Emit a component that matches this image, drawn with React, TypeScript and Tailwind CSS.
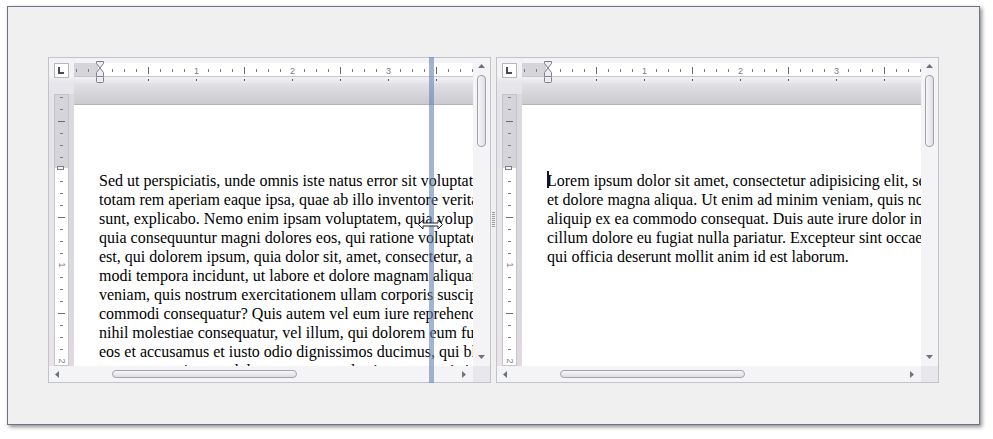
import React from "react";

const LEFT_LINES = [
  "Sed ut perspiciatis, unde omnis iste natus error sit voluptatem accusantium doloremque laudantium,",
  "totam rem aperiam eaque ipsa, quae ab illo inventore veritatis et quasi architecto beatae vitae dicta",
  "sunt, explicabo. Nemo enim ipsam voluptatem, quia voluptas sit, aspernatur aut odit aut fugit, sed",
  "quia consequuntur magni dolores eos, qui ratione voluptatem sequi nesciunt, neque porro quisquam",
  "est, qui dolorem ipsum, quia dolor sit, amet, consectetur, adipisci velit, sed quia non numquam eius",
  "modi tempora incidunt, ut labore et dolore magnam aliquam quaerat voluptatem. Ut enim ad minima",
  "veniam, quis nostrum exercitationem ullam corporis suscipit laboriosam, nisi ut aliquid ex ea",
  "commodi consequatur? Quis autem vel eum iure reprehenderit, qui in ea voluptate velit esse, quam",
  "nihil molestiae consequatur, vel illum, qui dolorem eum fugiat, quo voluptas nulla pariatur? At vero",
  "eos et accusamus et iusto odio dignissimos ducimus, qui blanditiis praesentium voluptatum deleniti",
  "atque corrupti, quos dolores et quas molestias excepturi sint, obcaecati cupiditate non provident,",
];

const RIGHT_LINES = [
  "Lorem ipsum dolor sit amet, consectetur adipisicing elit, sed do eiusmod tempor incididunt ut labore",
  "et dolore magna aliqua. Ut enim ad minim veniam, quis nostrud exercitation ullamco laboris nisi ut",
  "aliquip ex ea commodo consequat. Duis aute irure dolor in reprehenderit in voluptate velit esse",
  "cillum dolore eu fugiat nulla pariatur. Excepteur sint occaecat cupidatat non proident, sunt in culpa",
  "qui officia deserunt mollit anim id est laborum.",
];

const TICK = "#7c7c86";
const NUM = "#7a7a8a";

function HRuler() {
  const zero = 26;
  const items: React.ReactNode[] = [];
  for (let k = -2; k <= 32; k++) {
    const x = zero + 12 * k;
    if (x < 0 || x > 398 || k === 0) continue;
    if (k % 8 === 0) {
      items.push(
        <text key={k} x={x + 0.5} y={16} fontSize={9} textAnchor="middle" fill={NUM} fontFamily="'Liberation Sans', Arial, sans-serif">
          {k / 8}
        </text>
      );
    } else if (k % 4 === 0) {
      items.push(<rect key={k} x={x} y={9} width={1} height={7} fill="#6a6a74" />);
    } else {
      items.push(<rect key={k} x={x} y={11} width={1} height={3} fill={TICK} />);
    }
    if (k > 0 && k % 4 === 0) {
      items.push(<rect key={"t" + k} x={x} y={21} width={1} height={2} fill="#5a5a64" />);
    }
  }
  return (
    <svg width={399} height={25} shapeRendering="crispEdges" className="block">
      <rect x={0} y={5} width={399} height={14} fill="#ffffff" />
      <rect x={0} y={5} width={24} height={14} fill="#d4d4d9" />
      <rect x={0} y={18} width={399} height={1} fill="#c6c6cd" />
      {items}
      <g shapeRendering="auto" stroke="#7e7e8c" strokeWidth={1} fill="#ececf1">
        <path d="M22.5 3.5 H29.5 V5.5 L26 10 L22.5 5.5 Z" />
        <path d="M26 10 L29.5 14.5 V18.5 H22.5 V14.5 Z" />
        <rect x={22.5} y={18.5} width={7} height={6} rx={1} />
      </g>
    </svg>
  );
}

function VRuler() {
  const zero = 75;
  const items: React.ReactNode[] = [];
  for (let k = -6; k <= 17; k++) {
    const y = zero + 12 * k;
    if (y < 1 || y > 270 || k === 0) continue;
    if (k % 8 === 0) {
      items.push(
        <text
          key={k}
          x={0}
          y={0}
          fontSize={9}
          textAnchor="middle"
          fill={NUM}
          fontFamily="'Liberation Sans', Arial, sans-serif"
          transform={`translate(4.5 ${y}) rotate(90)`}
        >
          {k / 8}
        </text>
      );
    } else if (k % 4 === 0) {
      items.push(<rect key={k} x={4} y={y} width={7} height={1} fill="#6a6a74" />);
    } else {
      items.push(<rect key={k} x={6} y={y} width={3} height={1} fill={TICK} />);
    }
  }
  return (
    <svg width={15} height={272} shapeRendering="crispEdges" className="block">
      <rect x={0} y={0} width={15} height={272} fill="#ffffff" />
      <rect x={0} y={0} width={15} height={74} fill="#d4d4d9" />
      <rect x={0.5} y={0.5} width={14} height={271} fill="none" stroke="#c4c4cc" />
      {items}
      <rect x={3.5} y={72.5} width={6} height={3} fill="#f2f2f4" stroke="#7e7e8c" />
    </svg>
  );
}

function Tri({ dir }: { dir: "up" | "down" | "left" | "right" }) {
  const pts = {
    up: "0,4 7,4 3.5,0",
    down: "0,0 7,0 3.5,4",
    left: "4,0 4,7 0,3.5",
    right: "0,0 0,7 4,3.5",
  }[dir];
  const vertical = dir === "up" || dir === "down";
  return (
    <svg width={vertical ? 7 : 4} height={vertical ? 4 : 7} className="block">
      <polygon points={pts} fill="#72727c" />
    </svg>
  );
}

function Panel({ lines, caret }: { lines: string[]; caret?: boolean }) {
  return (
    <div className="w-[443px] h-[326px] border border-[#bfc3ca] bg-[#f2f2f4] grid grid-cols-[424px_17px] grid-rows-[308px_16px]">
      <div className="flex flex-col min-h-0">
        <div className="h-[25px] flex items-start bg-gradient-to-b from-[#f3f3f5] from-[70%] to-[#e7e7eb]">
          <div className="ml-[5px] mt-[5px] w-[15px] h-[15px] bg-white border border-[#b6b6be] flex items-center justify-center">
            <svg width={7} height={7} className="block" shapeRendering="crispEdges">
              <rect x={0} y={0} width={2} height={7} fill="#4a4a52" />
              <rect x={0} y={5} width={6} height={2} fill="#4a4a52" />
            </svg>
          </div>
          <div className="ml-[5px]">
            <HRuler />
          </div>
        </div>
        <div className="flex-1 flex min-h-0">
          <div className="w-[25px] flex pl-[5px] pt-[11px] bg-gradient-to-b from-[#e6e6ea] from-[78%] to-[#ebe2e8]">
            <VRuler />
            <div className="w-[5px] bg-gradient-to-b from-[#dadade] from-[78%] to-[#e2d8e0]" />
          </div>
          <div className="w-[399px] flex flex-col min-h-0">
            <div className="h-[22px] bg-gradient-to-b from-[#e2e2e6] to-[#cacacf] border-b border-[#b4b4bb]" />
            <div className="flex-1 bg-white overflow-hidden relative pl-[25px] pt-[66px] font-['Liberation_Serif','Times_New_Roman',serif] text-[16px] leading-[19px] text-black whitespace-nowrap">
              {lines.map((l) => (
                <div key={l}>{l}</div>
              ))}
              {caret && <div className="absolute left-[25px] top-[66px] w-[2px] h-[17px] bg-[#141428]" />}
            </div>
          </div>
        </div>
      </div>
      <div className="flex flex-col items-center pt-[6px] pb-[7px] bg-[#f4f4f6]">
        <Tri dir="up" />
        <div className="mt-[7px] w-[9px] h-[72px] rounded-[4px] border border-[#a2a2ac] bg-gradient-to-r from-[#f7f7f9] to-[#dedee4]" />
        <div className="flex-1" />
        <Tri dir="down" />
      </div>
      <div className="flex items-center pl-[6px] pr-[7px] bg-[#f4f4f6]">
        <Tri dir="left" />
        <div className="ml-[53px] w-[185px] h-[8px] rounded-[4px] border border-[#a2a2ac] bg-gradient-to-b from-[#f7f7f9] to-[#dedee4]" />
        <div className="flex-1" />
        <Tri dir="right" />
      </div>
      <div className="bg-[#e8e8ec]" />
    </div>
  );
}

export default function App() {
  return (
    <div className="w-[993px] h-[439px] bg-white overflow-hidden pt-[6px] pl-[7px]">
      <div className="w-[973px] h-[419px] border border-[#6b7582] bg-[#f0f0f0] shadow-[2px_2px_4px_rgba(0,0,0,0.45)] pl-[40px] pt-[50px] flex items-start">
        <div className="relative">
          <Panel lines={LEFT_LINES} />
          {/* splitter drag line */}
          <div className="absolute left-[381px] top-0 w-[5px] h-full bg-[rgba(100,130,180,0.6)]" />
          <svg width={25} height={11} className="absolute left-[370px] top-[162px]">
            <path
              d="M0.5 5.5 L5 1 V4 H20 V1 L24.5 5.5 L20 10 V7 H5 V10 Z"
              fill="#ffffff"
              stroke="#222"
              strokeWidth={1}
              strokeLinejoin="miter"
            />
          </svg>
        </div>
        <div className="w-[5px] h-[326px] flex items-center justify-center">
          <svg width={3} height={16} className="block" shapeRendering="crispEdges">
            {Array.from({ length: 8 }).map((_, i) => (
              <rect key={i} x={0} y={i * 2} width={3} height={1} fill="#9a9aa4" />
            ))}
          </svg>
        </div>
        <Panel lines={RIGHT_LINES} caret />
      </div>
    </div>
  );
}
